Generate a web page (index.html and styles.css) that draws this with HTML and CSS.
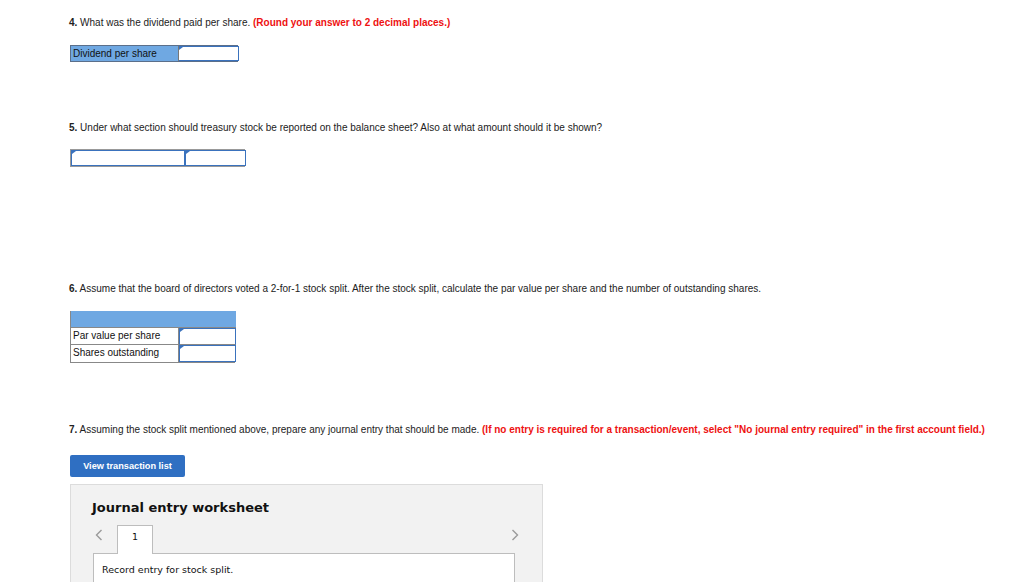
FILE: index.html
```html
<!DOCTYPE html>
<html>
<head>
<meta charset="utf-8">
<link rel="stylesheet" href="styles.css">
</head>
<body>
<div class="page">
  <p class="q q4"><b>4.</b> What was the dividend paid per share. <span class="note">(Round your answer to 2 decimal places.)</span></p>
  <div class="grid dividend">
    <div class="label blue">Dividend per share</div>
    <div class="input"></div>
  </div>

  <p class="q q5"><b>5.</b> Under what section should treasury stock be reported on the balance sheet? Also at what amount should it be shown?</p>
  <div class="grid treasury">
    <div class="input"></div>
    <div class="input"></div>
  </div>

  <p class="q q6"><b>6.</b> Assume that the board of directors voted a 2-for-1 stock split. After the stock split, calculate the par value per share and the number of outstanding shares.</p>
  <div class="grid split">
    <div class="head"></div>
    <div class="label">Par value per share</div>
    <div class="input"></div>
    <div class="label">Shares outstanding</div>
    <div class="input"></div>
  </div>

  <p class="q q7"><b>7.</b> Assuming the stock split mentioned above, prepare any journal entry that should be made. <span class="note">(If no entry is required for a transaction/event, select "No journal entry required" in the first account field.)</span></p>
  <button class="btn">View transaction list</button>

  <div class="worksheet">
    <h2 class="ws-title">Journal entry worksheet</h2>
    <div class="tabs">
      <span class="arrow">
        <svg width="8" height="12" viewBox="0 0 8 12"><path d="M6.5 1 L1.5 6 L6.5 11" fill="none" stroke="#9a9a9a" stroke-width="1.4"/></svg>
      </span>
      <span class="tab">1</span>
      <span class="spacer"></span>
      <span class="arrow right">
        <svg width="8" height="12" viewBox="0 0 8 12"><path d="M1.5 1 L6.5 6 L1.5 11" fill="none" stroke="#9a9a9a" stroke-width="1.4"/></svg>
      </span>
    </div>
    <div class="panel">
      <p class="record">Record entry for stock split.</p>
    </div>
  </div>
</div>
</body>
</html>
```
FILE: styles.css
```css
html, body {
  margin: 0;
  padding: 0;
  background: #fff;
  overflow: hidden;
}
.page {
  padding: 17px 0 0 69px;
  font-family: "Liberation Sans", Arial, sans-serif;
  font-size: 10px;
  color: #222;
  width: 940px;
  height: 565px;
  overflow: hidden;
}
.q {
  margin: 0;
  line-height: 12px;
}
.q b { font-weight: bold; }
.note {
  color: #ee1111;
  font-weight: bold;
}
.grid {
  display: grid;
  margin-left: 1px;
  box-sizing: border-box;
}
.dividend {
  margin-top: 16px;
  width: 168px;
  grid-template-columns: 108px 60px;
  height: 17px;
  border: 1px solid #5b6f8a;
}
.label {
  padding-left: 2px;
  line-height: 15px;
  border-right: 1px solid #777;
  color: #111;
}
.blue { background: #6fa8e2; }
.input {
  position: relative;
  border: 1px solid #3a72bd;
  background: #fff;
}
.input::before {
  content: "";
  position: absolute;
  left: 0;
  top: 0;
  border-left: 4px solid #3a72bd;
  border-bottom: 3px solid transparent;
}
.dividend .input { border-left: none; }

.q5 { margin-top: 60px; }
.treasury {
  margin-top: 15px;
  width: 175px;
  height: 18px;
  grid-template-columns: 114px 61px;
  border: 1px solid #999;
}
.treasury .input:first-child { box-shadow: 1px 0 0 #999; }

.q6 { margin-top: 116px; }
.split {
  margin-top: 16px;
  width: 165px;
  grid-template-columns: 108px 57px;
  grid-template-rows: 17px 17px 17px;
  border: 1px solid #888;
  border-top: none;
}
.split .head {
  grid-column: 1 / 3;
  background: #6fa8e2;
  border-bottom: 1px solid #888;
}
.split .label {
  border-right: 1px solid #888;
  line-height: 16px;
}
.split > div:nth-child(2), .split > div:nth-child(3) {
  border-bottom: 1px solid #888;
}

.q7 { margin-top: 61px; }
.btn {
  display: block;
  margin: 19px 0 0 1px;
  width: 115px;
  height: 22px;
  background: #2f6fc2;
  border: none;
  border-radius: 2px;
  color: #fff;
  font-family: "Liberation Sans", Arial, sans-serif;
  font-size: 9.2px;
  font-weight: bold;
  padding: 0;
}
.worksheet {
  margin: 7px 0 0 1px;
  width: 473px;
  height: 120px;
  box-sizing: border-box;
  background: #f2f2f2;
  border: 1px solid #dcdcdc;
  padding: 14px 27px 0 21px;
  font-family: "DejaVu Sans", Verdana, sans-serif;
}
.ws-title {
  margin: 0;
  font-size: 13px;
  font-weight: bold;
  color: #111;
  line-height: 17px;
}
.tabs {
  display: flex;
  align-items: flex-start;
  margin-top: 9px;
  height: 28px;
}
.arrow {
  display: flex;
  align-items: center;
  height: 20px;
  padding: 0 6px 0 3px;
}
.arrow.right { padding: 0; margin-right: -4px; }
.tab {
  width: 36px;
  height: 29px;
  box-sizing: border-box;
  background: #fff;
  border: 1px solid #bdbdbd;
  border-bottom: none;
  margin-left: 8px;
  text-align: center;
  line-height: 22px;
  font-size: 9.5px;
  color: #111;
  position: relative;
  z-index: 1;
}
.spacer { flex: 1; }
.panel {
  background: #fff;
  border: 1px solid #bdbdbd;
  height: 60px;
  margin-left: 1px;
}
.record {
  margin: 0;
  padding: 10px 0 0 8px;
  font-size: 9.5px;
  color: #111;
}
```
